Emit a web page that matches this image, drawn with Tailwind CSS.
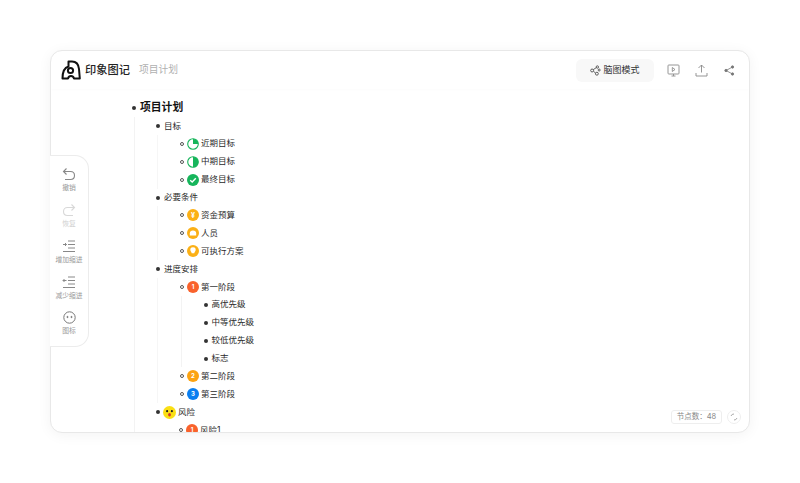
<!DOCTYPE html>
<html lang="zh-CN">
<head>
<meta charset="UTF-8">
<title>印象图记</title>
<script src="https://cdn.jsdelivr.net/npm/@tailwindcss/browser@4"></script>
</head>
<body class="bg-white w-[800px] h-[483px] overflow-hidden font-['Inter','Noto_Sans_CJK_SC',sans-serif]">
<div class="pt-[50px] px-[50px]">
  <!-- 主卡片 -->
  <div class="relative w-[700px] h-[383px] bg-white rounded-[12px] border border-[#e8e8e8] shadow-[0_2px_14px_rgba(0,0,0,0.05)] overflow-hidden">
    <!-- 顶栏 -->
    <div class="h-[38px] flex items-center pl-[10px] pr-[14px] shadow-[0_1px_3px_rgba(0,0,0,0.015)]">
      <svg class="w-[20px] h-[20px]" viewBox="0 0 20 20" fill="none" stroke="#111" stroke-width="2" stroke-linejoin="round">
        <path d="M1.500 18.500 H7 C7.500 16.700 8.800 16 10 16 S12.500 16.700 13 18.500 H18.800 L18 9 C17.500 4 15 1.500 11 1.500 H7.500 V6.500 C4 7.500 1.500 12 1.500 18.500 Z"/>
        <circle cx="9.500" cy="10.500" r="2.600"/>
      </svg>
      <span class="ml-[4px] text-[11.250px] font-medium text-[#222]">印象图记</span>
      <span class="ml-[9px] text-[9.750px] text-[#b0b0b0]">项目计划</span>
      <div class="ml-auto mr-[1px] w-[78px] h-[23px] rounded-[6px] bg-[#f8f8f8] flex items-center justify-center gap-[2px]">
        <svg class="w-[11px] h-[11px]" viewBox="0 0 12 12" fill="none" stroke="#444" stroke-width="0.9">
          <circle cx="2.300" cy="6" r="1.600"/><circle cx="8" cy="2.200" r="1.300"/><circle cx="10" cy="5.500" r="1.100"/><circle cx="7.500" cy="9.500" r="1.600"/>
          <path d="M3.600 5 L6.900 2.900 M3.800 6.800 L6 8.800"/>
        </svg>
        <span class="text-[9px] text-[#333]">脑图模式</span>
      </div>
      <svg class="ml-[12px] w-[13px] h-[13px]" viewBox="0 0 13 13" fill="none" stroke="#8a8a8a" stroke-width="0.9">
        <rect x="1" y="1" width="11" height="9" rx="0.800"/><path d="M5.300 3.500 L8 5.500 L5.300 7.500Z M4.500 12 H8.500 M6.500 10 V12"/>
      </svg>
      <svg class="ml-[15px] w-[13px] h-[13px]" viewBox="0 0 13 13" fill="none" stroke="#8a8a8a" stroke-width="0.9">
        <path d="M6.500 1 V8.500 M3.500 4 L6.500 1 L9.500 4 M1 9 V12 H12 V9"/>
      </svg>
      <svg class="ml-[16px] w-[11px] h-[11px]" viewBox="0 0 11 11" fill="#777" stroke="#777" stroke-width="0.8">
        <circle cx="8.500" cy="2" r="1.200"/><circle cx="2" cy="5.500" r="1.200"/><circle cx="8.500" cy="9" r="1.200"/><path d="M8.500 2 L2 5.500 L8.500 9" fill="none"/>
      </svg>
    </div>

    <!-- 大纲 -->
    <div class="pl-[79px] pt-[10.500px] text-[8.500px] text-[#2a2a2a]">
      <div class="h-[17.500px] flex items-center text-[10.800px] font-semibold text-[#111]">
        <span class="w-[4px] h-[4px] rounded-full bg-[#333] mr-[4px] ml-[2px]"></span>项目计划
      </div>
      <div class="ml-[4px] pl-[21px] border-l border-[#f3f3f3]">
        <div class="h-[17.900px] flex items-center"><span class="w-[4px] h-[4px] rounded-full bg-[#333] mr-[4px]"></span>目标</div>
        <div class="ml-[1px] pl-[22px] border-l border-[#f6f6f6]">
          <div class="h-[17.900px] flex items-center"><span class="w-[4px] h-[4px] rounded-full border border-[#555] mr-[3px]"></span>
            <svg class="w-[12px] h-[12px] mr-[2px]" viewBox="0 0 12 12"><circle cx="6" cy="6" r="5.300" fill="#fff" stroke="#16b55b" stroke-width="1.100"/><path d="M6 6 V0.700 A5.300 5.300 0 0 1 11.300 6Z" fill="#16b55b"/></svg>近期目标</div>
          <div class="h-[17.900px] flex items-center"><span class="w-[4px] h-[4px] rounded-full border border-[#555] mr-[3px]"></span>
            <svg class="w-[12px] h-[12px] mr-[2px]" viewBox="0 0 12 12"><circle cx="6" cy="6" r="5.300" fill="#fff" stroke="#16b55b" stroke-width="1.100"/><path d="M6 0.700 A5.300 5.300 0 0 1 6 11.300Z" fill="#16b55b"/></svg>中期目标</div>
          <div class="h-[17.900px] flex items-center"><span class="w-[4px] h-[4px] rounded-full border border-[#555] mr-[3px]"></span>
            <svg class="w-[12px] h-[12px] mr-[2px]" viewBox="0 0 12 12"><circle cx="6" cy="6" r="6" fill="#16b55b"/><path d="M3.200 6.200 L5.200 8 L8.800 4.300" fill="none" stroke="#fff" stroke-width="1.400"/></svg>最终目标</div>
        </div>
        <div class="h-[17.900px] flex items-center"><span class="w-[4px] h-[4px] rounded-full bg-[#333] mr-[4px]"></span>必要条件</div>
        <div class="ml-[1px] pl-[22px] border-l border-[#f6f6f6]">
          <div class="h-[17.900px] flex items-center"><span class="w-[4px] h-[4px] rounded-full border border-[#555] mr-[3px]"></span>
            <span class="w-[12px] h-[12px] mr-[2px] rounded-full bg-[#fbb016] flex items-center justify-center text-[7px] leading-none text-white font-bold">¥</span>资金预算</div>
          <div class="h-[17.900px] flex items-center"><span class="w-[4px] h-[4px] rounded-full border border-[#555] mr-[3px]"></span>
            <svg class="w-[12px] h-[12px] mr-[2px]" viewBox="0 0 12 12"><circle cx="6" cy="6" r="6" fill="#fbb016"/><path d="M2.800 8.500 V6.500 C2.800 4.800 4 3.500 6 3.500 S9.200 4.800 9.200 6.500 V8.500Z" fill="#fff"/></svg>人员</div>
          <div class="h-[17.900px] flex items-center"><span class="w-[4px] h-[4px] rounded-full border border-[#555] mr-[3px]"></span>
            <svg class="w-[12px] h-[12px] mr-[2px]" viewBox="0 0 12 12"><circle cx="6" cy="6" r="6" fill="#fbb016"/><path d="M3.300 4.800 A2.700 2.500 0 0 1 8.700 4.800 C8.700 6.300 7.500 6.800 7.300 8.300 H4.700 C4.500 6.800 3.300 6.300 3.300 4.800Z" fill="#fff"/></svg>可执行方案</div>
        </div>
        <div class="h-[17.900px] flex items-center"><span class="w-[4px] h-[4px] rounded-full bg-[#333] mr-[4px]"></span>进度安排</div>
        <div class="ml-[1px] pl-[22px] border-l border-[#f6f6f6]">
          <div class="h-[17.900px] flex items-center"><span class="w-[4px] h-[4px] rounded-full border border-[#555] mr-[3px]"></span>
            <span class="w-[12px] h-[12px] mr-[2px] rounded-full bg-[#f9622c] flex items-center justify-center text-[6px] leading-none text-white font-bold">1</span>第一阶段</div>
          <div class="ml-[1px] pl-[22px] border-l border-[#f3f3f3]">
            <div class="h-[17.900px] flex items-center"><span class="w-[4px] h-[4px] rounded-full bg-[#333] mr-[3.500px]"></span>高优先级</div>
            <div class="h-[17.900px] flex items-center"><span class="w-[4px] h-[4px] rounded-full bg-[#333] mr-[3.500px]"></span>中等优先级</div>
            <div class="h-[17.900px] flex items-center"><span class="w-[4px] h-[4px] rounded-full bg-[#333] mr-[3.500px]"></span>较低优先级</div>
            <div class="h-[17.900px] flex items-center"><span class="w-[4px] h-[4px] rounded-full bg-[#333] mr-[3.500px]"></span>标志</div>
          </div>
          <div class="h-[17.900px] flex items-center"><span class="w-[4px] h-[4px] rounded-full border border-[#555] mr-[3px]"></span>
            <span class="w-[12px] h-[12px] mr-[2px] rounded-full bg-[#fca311] flex items-center justify-center text-[6px] leading-none text-white font-bold">2</span>第二阶段</div>
          <div class="h-[17.900px] flex items-center"><span class="w-[4px] h-[4px] rounded-full border border-[#555] mr-[3px]"></span>
            <span class="w-[12px] h-[12px] mr-[2px] rounded-full bg-[#0a7ff0] flex items-center justify-center text-[6px] leading-none text-white font-bold">3</span>第三阶段</div>
        </div>
        <div class="h-[17.900px] flex items-center"><span class="w-[4px] h-[4px] rounded-full bg-[#333] mr-[3px]"></span>
          <svg class="w-[13px] h-[13px] mr-[2px]" viewBox="0 0 12 12"><circle cx="6" cy="6" r="6" fill="#fadf14"/><circle cx="3.800" cy="4.800" r="1" fill="#222"/><circle cx="8.200" cy="4.800" r="1" fill="#222"/><ellipse cx="6" cy="8" rx="1.300" ry="1.600" fill="#d6362c"/></svg>风险</div>
        <div class="ml-[1px] pl-[22px]">
          <div class="h-[17.900px] flex items-center"><span class="w-[4px] h-[4px] rounded-full border border-[#555] mr-[3px]"></span>
            <span class="w-[12px] h-[12px] mr-[2px] rounded-full bg-[#f9622c] flex items-center justify-center text-[6px] leading-none text-white font-bold">1</span>风险1</div>
        </div>
      </div>
    </div>

    <!-- 节点数 -->
    <div class="absolute right-[27px] bottom-[8px] h-[14px] w-[51px] rounded-[3px] border border-[#eee] flex items-center justify-center text-[7.500px] text-[#888]">节点数：48</div>
    <div class="absolute right-[8px] bottom-[8px] w-[14px] h-[14px] rounded-full border border-[#eee] flex items-center justify-center">
      <svg class="w-[8px] h-[8px]" viewBox="0 0 8 8" fill="none" stroke="#aaa" stroke-width="1"><path d="M1 3 A3 3 0 0 1 4 1 M7 5 A3 3 0 0 1 4 7"/></svg>
    </div>
  </div>
</div>

<!-- 左侧工具条 -->
<div class="absolute left-[50px] top-[155px] w-[39px] h-[192px] bg-white rounded-r-[14px] border border-l-0 border-[#ececec] flex flex-col items-center pt-[11px] text-[6.800px] text-[#9a9a9a]">
  <svg class="w-[14px] h-[14px]" viewBox="0 0 14 14" fill="none" stroke="#888" stroke-width="1.100"><path d="M4.500 1.500 L1.500 4.500 L4.500 7.500 M1.500 4.500 H8.500 C11 4.500 12.500 6.300 12.500 8.500 S11 12.500 8.500 12.500 H3"/></svg>
  <span class="mt-[1px] h-[21px] leading-[12px]">撤销</span>
  <svg class="w-[14px] h-[14px]" viewBox="0 0 14 14" fill="none" stroke="#d8d8d8" stroke-width="1.100"><path d="M9.500 1.500 L12.500 4.500 L9.500 7.500 M12.500 4.500 H5.500 C3 4.500 1.500 6.300 1.500 8.500 S3 12.500 5.500 12.500 H11"/></svg>
  <span class="mt-[1px] h-[21px] leading-[12px] text-[#d0d0d0]">恢复</span>
  <svg class="w-[14px] h-[14px]" viewBox="0 0 14 14" fill="none" stroke="#888" stroke-width="1"><path d="M6 2 H13 M6 5.500 H13 M6 9 H13 M1 12.500 H13 M1 5.500 H4.500 M3 4 L4.500 5.500 L3 7"/></svg>
  <span class="mt-[1px] h-[21px] leading-[12px]">增加缩进</span>
  <svg class="w-[14px] h-[14px]" viewBox="0 0 14 14" fill="none" stroke="#888" stroke-width="1"><path d="M6 2 H13 M6 5.500 H13 M6 9 H13 M1 12.500 H13 M1 5.500 H4.500 M2.500 4 L1 5.500 L2.500 7"/></svg>
  <span class="mt-[1px] h-[21px] leading-[12px]">减少缩进</span>
  <svg class="w-[13px] h-[13px]" viewBox="0 0 13 13" fill="none" stroke="#777" stroke-width="1"><circle cx="6.500" cy="6.500" r="5.700"/><circle cx="4.500" cy="6" r="0.600" fill="#777"/><circle cx="8.500" cy="6" r="0.600" fill="#777"/></svg>
  <span class="mt-[1px] leading-[12px]">图标</span>
</div>
</body>
</html>
